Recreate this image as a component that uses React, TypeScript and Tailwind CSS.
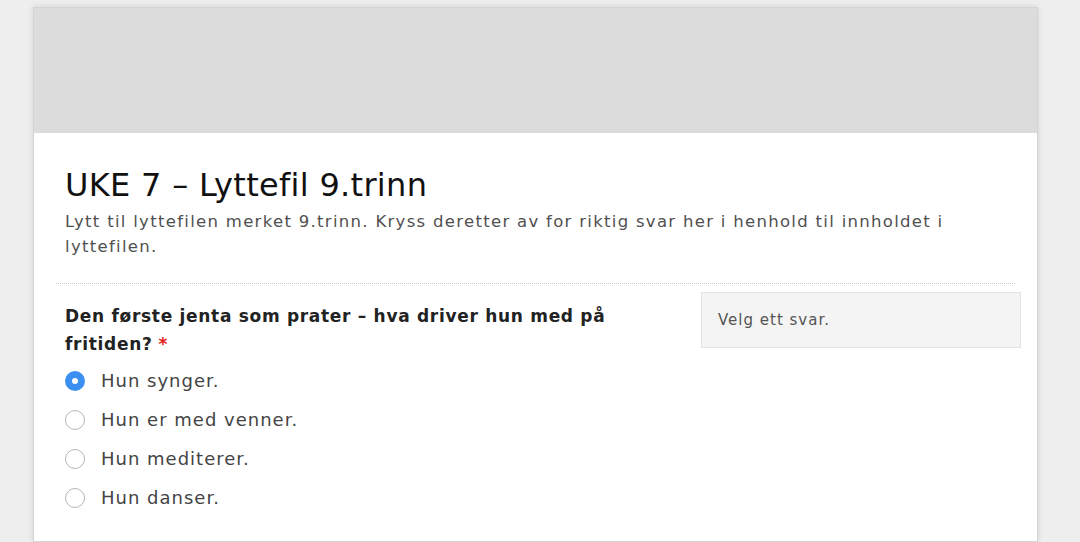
import React from 'react';

const options = ['Hun synger.', 'Hun er med venner.', 'Hun mediterer.', 'Hun danser.'];

function Radio({ checked }: { checked: boolean }) {
  if (checked) {
    return (
      <span className="flex h-[20px] w-[20px] shrink-0 items-center justify-center rounded-full bg-[#3b8ff0]">
        <span className="h-[6px] w-[6px] rounded-full bg-white" />
      </span>
    );
  }
  return <span className="h-[20px] w-[20px] shrink-0 rounded-full border border-[#b5b5b5] bg-white" />;
}

export default function App() {
  return (
    <div className="min-h-screen bg-[#eeeeee] pt-[7px] pl-[33px]" style={{ fontFamily: '"DejaVu Sans", Verdana, sans-serif' }}>
      <div className="h-[535px] w-[1005px] border border-[#d4d4d4] bg-white shadow-[0_0_6px_rgba(0,0,0,0.12)]">
        <div className="h-[125px] bg-[#dcdcdc]" />
        <div className="px-[31px] pt-[34px]">
          <h1 className="text-[32px] leading-[36px] tracking-[0.3px] text-[#111]">UKE 7 – Lyttefil 9.trinn</h1>
          <p className="mt-[6px] text-[16.5px] leading-[25px] tracking-[1.3px] text-[#505050]">
            Lytt til lyttefilen merket 9.trinn. Kryss deretter av for riktig svar her i henhold til innholdet i lyttefilen.
          </p>
        </div>
        <div className="mx-[22px] mt-[24px] border-t border-dotted border-[#c8c8c8]" />
        <div className="flex justify-between pr-[16px] pl-[31px] pt-[8px]">
          <div className="w-[580px] pt-[10px]">
            <p className="text-[17px] font-bold leading-[28px] tracking-[0.7px] text-[#222]">
              Den første jenta som prater – hva driver hun med på fritiden?
              <span className="ml-[6px] text-[#e02020]">*</span>
            </p>
            <div className="mt-[12px] flex flex-col gap-[18px]">
              {options.map((o, i) => (
                <label key={o} className="flex items-center gap-[16px] pl-[-1px]">
                  <Radio checked={i === 0} />
                  <span className="text-[18px] leading-[21px] tracking-[1px] text-[#444]">{o}</span>
                </label>
              ))}
            </div>
          </div>
          <div className="flex h-[56px] w-[320px] items-center border border-[#e4e4e4] bg-[#f4f4f4] px-[16px]">
            <span className="text-[15px] tracking-[1px] text-[#555]">Velg ett svar.</span>
          </div>
        </div>
      </div>
    </div>
  );
}
